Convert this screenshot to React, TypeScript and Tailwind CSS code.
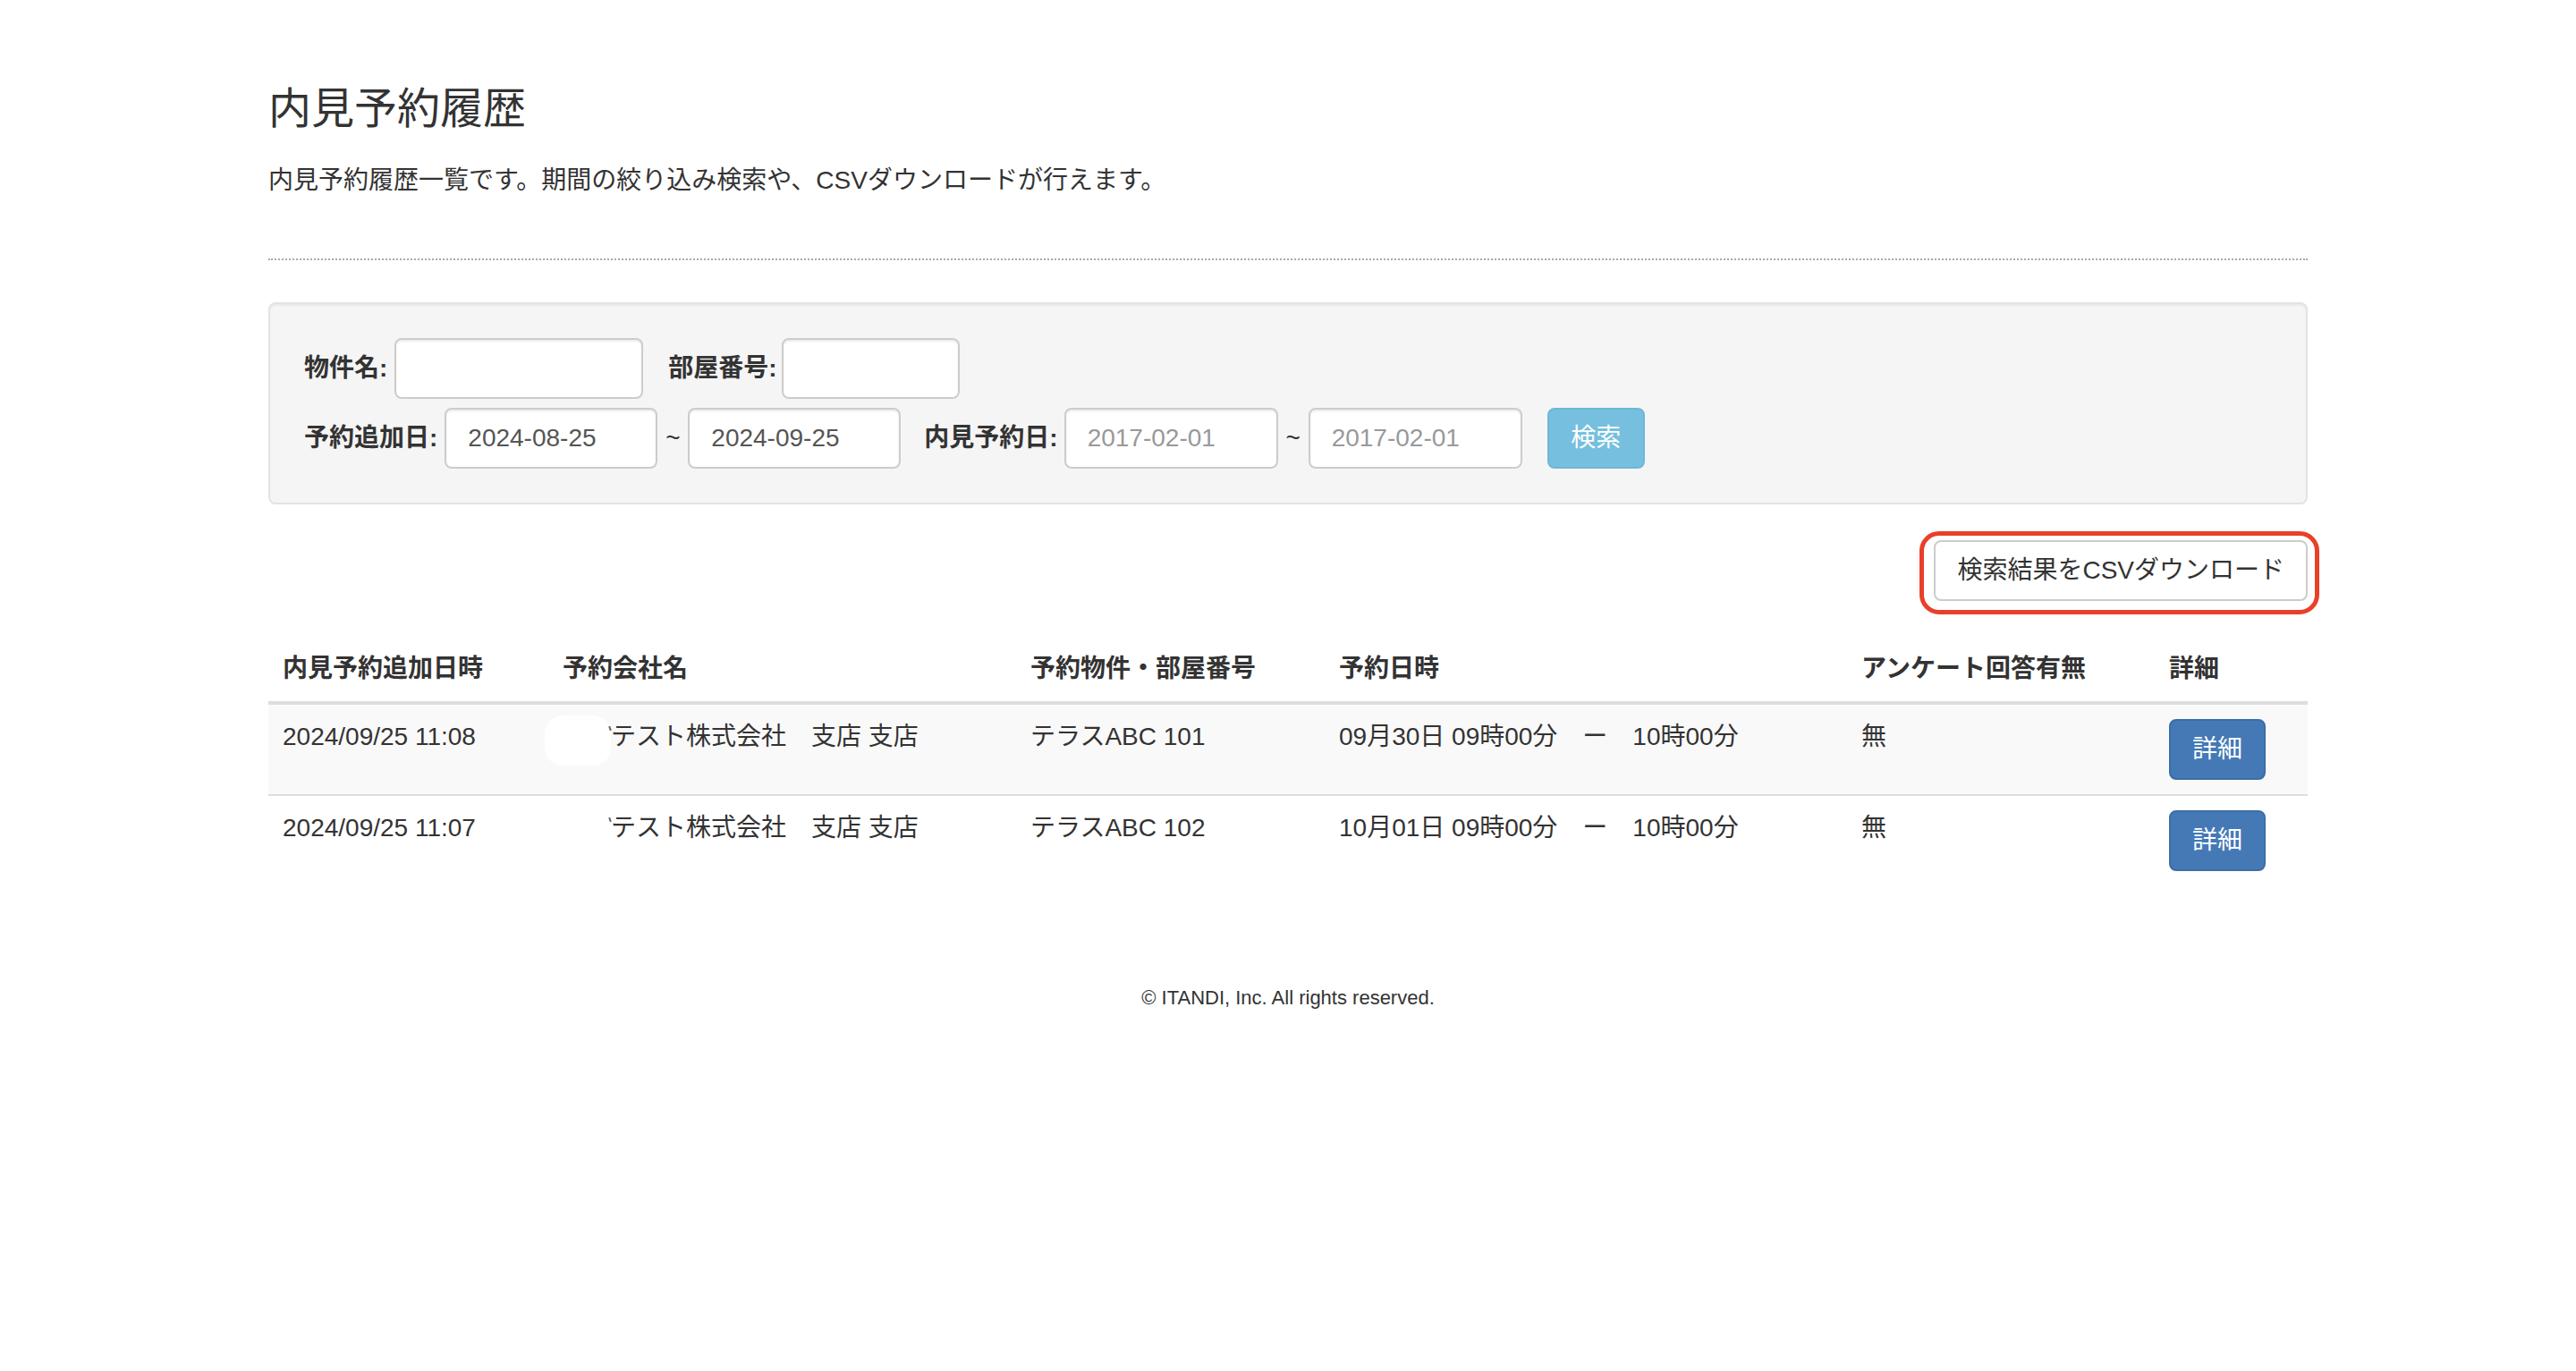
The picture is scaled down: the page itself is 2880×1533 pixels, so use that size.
// 内見予約履歴: 期間フィルタ付きの予約一覧と CSV 出力ボタン。

const FONT = "font-['Liberation_Sans','Noto_Sans_CJK_JP',sans-serif]";

type Row = {
  addedAt: string;
  company: string;
  room: string;
  slot: string;
  survey: string;
  masked: boolean;
};

const ROWS: Row[] = [
  {
    addedAt: "2024/09/25 11:08",
    company: "テスト株式会社　支店 支店",
    room: "テラスABC 101",
    slot: "09月30日 09時00分　ー　10時00分",
    survey: "無",
    masked: true,
  },
  {
    addedAt: "2024/09/25 11:07",
    company: "テスト株式会社　支店 支店",
    room: "テラスABC 102",
    slot: "10月01日 09時00分　ー　10時00分",
    survey: "無",
    masked: false,
  },
];

const inputBase =
  "h-[68px] rounded-[8px] border-2 border-[#ccc] bg-white px-[24px] text-[28px] text-[#555] " +
  "shadow-[inset_0_2px_2px_rgba(0,0,0,0.075)] outline-none placeholder:text-[#999]";

function Label({ children }: { children: React.ReactNode }) {
  return <label className="text-[28px] font-bold leading-[40px] text-[#333]">{children}</label>;
}

function Tilde() {
  return <span className="w-[34px] text-center text-[28px] leading-[40px] text-[#333]">~</span>;
}

function SearchForm() {
  return (
    <div className="mb-[40px] rounded-[8px] border-2 border-[#e3e3e3] bg-[#f5f5f5] p-[38px] shadow-[inset_0_2px_2px_rgba(0,0,0,0.05)]">
      <div className="flex items-center">
        <Label>物件名:</Label>
        <input className={inputBase + " ml-[8px] w-[278px]"} />
        <span className="ml-[28px]">
          <Label>部屋番号:</Label>
        </span>
        <input className={inputBase + " ml-[5px] w-[199px]"} />
      </div>
      <div className="mt-[10px] flex items-center">
        <Label>予約追加日:</Label>
        <input className={inputBase + " ml-[8px] w-[238px]"} defaultValue="2024-08-25" />
        <Tilde />
        <input className={inputBase + " w-[238px]"} defaultValue="2024-09-25" />
        <span className="ml-[26px]">
          <Label>内見予約日:</Label>
        </span>
        <input className={inputBase + " ml-[7px] w-[239px]"} placeholder="2017-02-01" />
        <Tilde />
        <input className={inputBase + " w-[239px]"} placeholder="2017-02-01" />
        <button className="ml-[28px] h-[68px] w-[109px] rounded-[8px] border-2 border-[#6cb8d8] bg-[#76bfde] text-[28px] text-white">
          検索
        </button>
      </div>
    </div>
  );
}

function CsvButton() {
  return (
    <div className="mb-[40px] flex justify-end">
      <div className="relative">
        <button className="h-[68px] rounded-[8px] border-2 border-[#ccc] bg-white px-[24px] text-[28px] text-[#333]">
          検索結果をCSVダウンロード
        </button>
        {/* 赤枠の強調 */}
        <span className="pointer-events-none absolute -top-[10px] -right-[13px] -bottom-[15px] -left-[16px] rounded-[22px] border-[5px] border-[#e8402a]" />
      </div>
    </div>
  );
}

function HistoryTable() {
  const th = "px-[16px] py-[16px] text-left align-bottom text-[28px] font-bold leading-[40px] text-[#333]";
  const td = "px-[16px] py-[16px] align-top text-[28px] leading-[40px] text-[#333]";
  return (
    <table className="w-full table-fixed border-collapse">
      <colgroup>
        <col className="w-[313px]" />
        <col className="w-[523px]" />
        <col className="w-[345px]" />
        <col className="w-[584px]" />
        <col className="w-[344px]" />
        <col className="w-[171px]" />
      </colgroup>
      <thead>
        <tr className="border-b-4 border-[#ddd]">
          <th className={th}>内見予約追加日時</th>
          <th className={th}>予約会社名</th>
          <th className={th}>予約物件・部屋番号</th>
          <th className={th}>予約日時</th>
          <th className={th}>アンケート回答有無</th>
          <th className={th}>詳細</th>
        </tr>
      </thead>
      <tbody>
        {ROWS.map((row, i) => (
          <tr key={row.addedAt} className={(i % 2 === 0 ? "bg-[#f9f9f9]" : "bg-white") + (i > 0 ? " border-t-2 border-[#ddd]" : "")}>
            <td className={td}>{row.addedAt}</td>
            <td className={td + " relative whitespace-nowrap"}>
              {row.masked && (
                <span className="absolute left-[-4px] top-[12px] h-[56px] w-[74px] rounded-[20px] bg-white" />
              )}
              <span className="relative inline-block w-[54px] align-top">
                <span className="absolute right-0 top-[8px] h-[5px] w-[2px] rotate-[-20deg] bg-[#666]" />
              </span>
              {row.company}
            </td>
            <td className={td}>{row.room}</td>
            <td className={td + " whitespace-nowrap"}>{row.slot}</td>
            <td className={td}>{row.survey}</td>
            <td className={td}>
              <button className="h-[68px] rounded-[8px] border-2 border-[#3b6ea6] bg-[#4479b6] px-[24px] text-[28px] text-white">
                詳細
              </button>
            </td>
          </tr>
        ))}
      </tbody>
    </table>
  );
}

export default function App() {
  return (
    <div className={FONT + " min-h-[1533px] bg-white text-[#333]"}>
      <div className="mx-auto w-[2280px] pt-[95px]">
        <h3 className="text-[48px] font-normal leading-[53px] text-[#333]">内見予約履歴</h3>
        <p className="mt-[34px] text-[28px] leading-[40px]">
          内見予約履歴一覧です。期間の絞り込み検索や、CSVダウンロードが行えます。
        </p>
        <div className="mt-[67px] mb-[47px] border-t-2 border-dotted border-[#aaa]" />
        <SearchForm />
        <CsvButton />
        <HistoryTable />
        <footer className="mt-[110px] text-center text-[22px] leading-[32px] text-[#333]">
          © ITANDI, Inc. All rights reserved.
        </footer>
      </div>
    </div>
  );
}
